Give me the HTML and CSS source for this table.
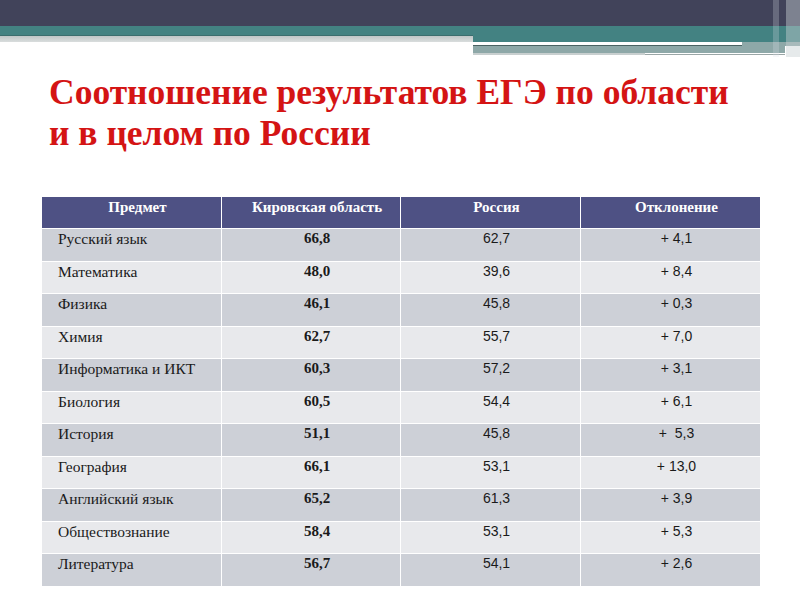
FILE: index.html
```html
<!DOCTYPE html>
<html lang="ru">
<head>
<meta charset="utf-8">
<title>Соотношение результатов ЕГЭ</title>
<link rel="stylesheet" href="styles.css">
</head>
<body>
<div class="slide">
  <div class="deco">
    <div class="bar-dark"></div>
    <div class="bar-teal"></div>
    <div class="deco-row">
      <div class="deco-left">
        <div class="dl-line"></div>
        <div class="dl-gray"></div>
      </div>
      <div class="deco-right">
        <div class="dr-teal"></div>
        <div class="dr-white"><div class="dr-white-line"></div></div>
        <div class="dr-dark"><div class="dr-dark-line"></div></div>
        <div class="dr-band"></div>
        <div class="dr-bottom"><div class="dr-bottom-gray"></div><div class="dr-bottom-white"></div></div>
      </div>
    </div>
    <div class="strip strip-a"></div>
    <div class="strip strip-b"></div>
  </div>

  <h1 class="title">Соотношение результатов ЕГЭ по области<br>и в целом по России</h1>

  <table class="results">
    <colgroup>
      <col class="c1"><col class="c2"><col class="c3"><col class="c4">
    </colgroup>
    <thead>
      <tr><th>Предмет</th><th>Кировская область</th><th>Россия</th><th>Отклонение</th></tr>
    </thead>
    <tbody>
      <tr><td class="subj">Русский язык</td><td class="kir">66,8</td><td class="num">62,7</td><td class="num">+ 4,1</td></tr>
      <tr><td class="subj">Математика</td><td class="kir">48,0</td><td class="num">39,6</td><td class="num">+ 8,4</td></tr>
      <tr><td class="subj">Физика</td><td class="kir">46,1</td><td class="num">45,8</td><td class="num">+ 0,3</td></tr>
      <tr><td class="subj">Химия</td><td class="kir">62,7</td><td class="num">55,7</td><td class="num">+ 7,0</td></tr>
      <tr><td class="subj">Информатика и ИКТ</td><td class="kir">60,3</td><td class="num">57,2</td><td class="num">+ 3,1</td></tr>
      <tr><td class="subj">Биология</td><td class="kir">60,5</td><td class="num">54,4</td><td class="num">+ 6,1</td></tr>
      <tr><td class="subj">История</td><td class="kir">51,1</td><td class="num">45,8</td><td class="num">+&nbsp; 5,3</td></tr>
      <tr><td class="subj">География</td><td class="kir">66,1</td><td class="num">53,1</td><td class="num">+ 13,0</td></tr>
      <tr><td class="subj">Английский язык</td><td class="kir">65,2</td><td class="num">61,3</td><td class="num">+ 3,9</td></tr>
      <tr><td class="subj">Обществознание</td><td class="kir">58,4</td><td class="num">53,1</td><td class="num">+ 5,3</td></tr>
      <tr><td class="subj">Литература</td><td class="kir">56,7</td><td class="num">54,1</td><td class="num">+ 2,6</td></tr>
    </tbody>
  </table>
</div>
</body>
</html>
```
FILE: styles.css
```css
html, body {
  margin: 0;
  padding: 0;
  background: #ffffff;
}

.slide {
  position: relative;
  width: 800px;
  height: 600px;
  overflow: hidden;
  background: #ffffff;
}

/* ---- top decoration ---- */
.deco {
  position: relative;
  height: 57px;
}
.bar-dark {
  height: 26px;
  background: #41435a;
}
.bar-teal {
  height: 9px;
  background: #438282;
}
.deco-row {
  display: flex;
  height: 22px;
}
.deco-left {
  width: 473px;
}
.dl-line {
  height: 1px;
  background: #3b6e6e;
}
.dl-gray {
  height: 6px;
  background: linear-gradient(#bfc6c7, #d9dddd);
}
.deco-right {
  flex: 1;
  display: flex;
  flex-direction: column;
}
.dr-teal {
  height: 7px;
  background: #438282;
}
.dr-white {
  height: 3px;
  background: #8ea8a8;
}
.dr-white-line {
  width: 269px;
  height: 3px;
  background: #ffffff;
}
.dr-dark {
  height: 1px;
  background: #8ea8a8;
}
.dr-dark-line {
  width: 269px;
  height: 1px;
  background: #4a6262;
}
.dr-band {
  height: 7px;
  background: #8ea8a8;
  margin-right: 15px;
}
.dr-bottom {
  display: flex;
  height: 2px;
}
.dr-bottom-gray {
  width: 172px;
  background: #c8cfcf;
}
.dr-bottom-white {
  width: 140px;
  background: #ffffff;
  border-bottom: 1px solid #9aa6a6;
}
.strip {
  position: absolute;
  top: 0;
  height: 57px;
}
.strip-a {
  left: 773px;
  width: 6px;
  background: rgba(220, 225, 230, 0.25);
}
.strip-b {
  left: 786px;
  width: 14px;
  background: rgba(200, 208, 210, 0.45);
}

/* ---- title ---- */
.title {
  margin: 15px 0 0 49px;
  font-family: "Liberation Serif", "Tinos", "Times New Roman", "DejaVu Serif", serif;
  font-weight: bold;
  font-size: 35.5px;
  line-height: 41px;
  color: #d41414;
}

/* ---- table ---- */
.results {
  margin: 42px 0 0 41px;
  width: 719px;
  border-collapse: collapse;
  table-layout: fixed;
}
.c1 { width: 180px; }
.c2 { width: 179px; }
.c3 { width: 180px; }
.c4 { width: 180px; }

.results th,
.results td {
  border: 1px solid #ffffff;
  vertical-align: top;
  padding: 0;
}
.results th {
  height: 29px;
  background: #4e5184;
  color: #ffffff;
  font-family: "Liberation Serif", "Tinos", "Times New Roman", "DejaVu Serif", serif;
  font-weight: bold;
  font-size: 15px;
  line-height: 17px;
  text-align: center;
  padding: 2px 0 0 12px;
}
.results td {
  height: 30.5px;
  padding-top: 1px;
  color: #1a1a1a;
  text-align: center;
  padding-left: 12px;
}
.results tbody tr:nth-child(odd) td {
  background: #cdd0d7;
}
.results tbody tr:nth-child(even) td {
  background: #e8e9ec;
}
.results td.subj {
  text-align: left;
  padding-left: 16px;
  font-family: "Liberation Serif", "Tinos", "Times New Roman", "DejaVu Serif", serif;
  font-size: 15.5px;
  line-height: 17px;
}
.results td.kir {
  font-family: "Liberation Serif", "Tinos", "Times New Roman", "DejaVu Serif", serif;
  font-weight: bold;
  font-size: 15px;
  line-height: 17px;
}
.results td.num {
  font-family: "Liberation Sans", "DejaVu Sans", sans-serif;
  font-size: 14px;
  line-height: 17px;
}
```
